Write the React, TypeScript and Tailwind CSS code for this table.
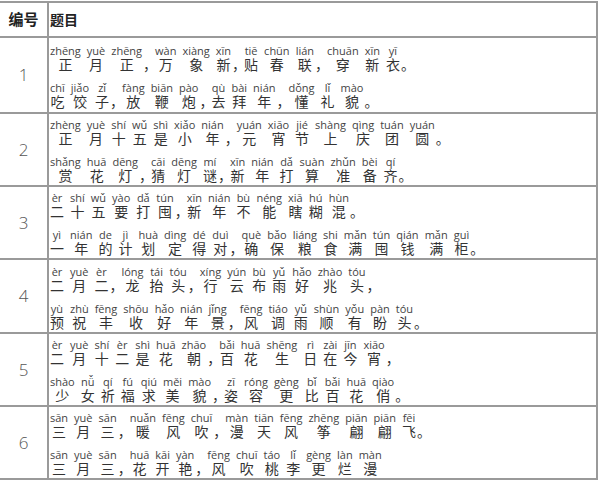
import React from "react";

type Word = [string, string, string];

const rows: { n: number; h: string; lines: Word[][] }[] = [
  {
    n: 1,
    h: "h-[76px]",
    lines: [
      [
        ["zhēng yuè zhēng", "正月正", "，"],
        ["wàn xiàng xīn", "万象新", "，"],
        ["tiē chūn lián", "贴春联", "，"],
        ["chuān xīn yī", "穿新衣", "。"],
      ],
      [
        ["chī jiǎo zǐ", "吃饺子", "，"],
        ["fàng biān pào", "放鞭炮", "，"],
        ["qù bài nián", "去拜年", "，"],
        ["dǒng lǐ mào", "懂礼貌", "。"],
      ],
    ],
  },
  {
    n: 2,
    h: "h-[73px]",
    lines: [
      [
        ["zhèng yuè shí wǔ shì xiǎo nián", "正月十五是小年", "，"],
        ["yuán xiāo jié shàng qìng tuán yuán", "元宵节上庆团圆", "。"],
      ],
      [
        ["shǎng huā dēng", "赏花灯", "，"],
        ["cāi dēng mí", "猜灯谜", "，"],
        ["xīn nián dǎ suàn zhǔn bèi qí", "新年打算准备齐", "。"],
      ],
    ],
  },
  {
    n: 3,
    h: "h-[73px]",
    lines: [
      [
        ["èr shí wǔ yào dǎ tún", "二十五要打囤", "，"],
        ["xīn nián bù néng xiā hú hùn", "新年不能瞎糊混", "。"],
      ],
      [
        ["yì nián de jì huà dìng dé duì", "一年的计划定得对", "，"],
        ["què bǎo liáng shi mǎn tún qián mǎn guì", "确保粮食满囤钱满柜", "。"],
      ],
    ],
  },
  {
    n: 4,
    h: "h-[74px]",
    lines: [
      [
        ["èr yuè èr", "二月二", "，"],
        ["lóng tái tóu", "龙抬头", "，"],
        ["xíng yún bù yǔ hǎo zhào tóu", "行云布雨好兆头", "，"],
      ],
      [
        ["yù zhù fēng shōu hǎo nián jǐng", "预祝丰收好年景", "，"],
        ["fēng tiáo yǔ shùn yǒu pàn tóu", "风调雨顺有盼头", "。"],
      ],
    ],
  },
  {
    n: 5,
    h: "h-[73px]",
    lines: [
      [
        ["èr yuè shí èr shì huā zhāo", "二月十二是花朝", "，"],
        ["bǎi huā shēng rì zài jīn xiāo", "百花生日在今宵", "，"],
      ],
      [
        ["shào nǚ qí fú qiú měi mào", "少女祈福求美貌", "，"],
        ["zī róng gèng bǐ bǎi huā qiào", "姿容更比百花俏", "。"],
      ],
    ],
  },
  {
    n: 6,
    h: "h-[73px]",
    lines: [
      [
        ["sān yuè sān", "三月三", "，"],
        ["nuǎn fēng chuī", "暖风吹", "，"],
        ["màn tiān fēng zhēng piān piān fēi", "漫天风筝翩翩飞", "。"],
      ],
      [
        ["sān yuè sān", "三月三", "，"],
        ["huā kāi yàn", "花开艳", "，"],
        ["fēng chuī táo lǐ gèng làn màn", "风吹桃李更烂漫", ""],
      ],
    ],
  },
];

const py = "block text-[11px] leading-[13px] text-[#444] font-['Open_Sans',sans-serif] whitespace-nowrap";
const hz = "block text-[14px] leading-[15px] text-[#333] font-['Noto_Sans_CJK_SC',sans-serif]";

function Line({ words }: { words: Word[] }) {
  return (
    <div className="flex gap-[3px]">
      {words.map(([p, h, punct], wi) => {
        const syl = p.split(" ");
        const chars = Array.from(h);
        return (
          <div key={wi} className="flex">
            <div className="flex gap-[6px]">
              {syl.map((s, i) => (
                <div key={i} className="flex flex-col items-center">
                  <span className={py}>{s}</span>
                  <span className={hz}>{chars[i]}</span>
                </div>
              ))}
            </div>
            {punct && (
              <div className="flex flex-col w-[9px] ml-[1px] overflow-visible">
                <span className={py}>&nbsp;</span>
                <span className={hz + " whitespace-nowrap"}>{punct}</span>
              </div>
            )}
          </div>
        );
      })}
    </div>
  );
}

export default function App() {
  return (
    <div className="w-[600px] h-[482px] bg-white pt-[1px] overflow-hidden">
      <div className="w-[598px] border-t-2 border-r-2 border-[#9a9a9a]">
        <div className="flex h-[35px] border-b-2 border-[#9a9a9a]">
          <div className="w-[49px] shrink-0 border-r-2 border-[#9a9a9a] flex items-center justify-center text-[15px] font-bold text-[#222] font-['Noto_Sans_CJK_SC',sans-serif]">
            编号
          </div>
          <div className="flex items-center pl-[1px] text-[14px] font-bold text-[#222] font-['Noto_Sans_CJK_SC',sans-serif]">
            题目
          </div>
        </div>
        {rows.map((r) => (
          <div key={r.n} className={"flex border-b-2 border-[#9a9a9a] " + r.h}>
            <div className="w-[49px] shrink-0 border-r-2 border-[#9a9a9a] flex items-center justify-center text-[17px] font-light text-[#555] font-['Open_Sans',sans-serif]">
              {r.n}
            </div>
            <div className="flex flex-col justify-center gap-[9px] pt-[2px] pl-[1px]">
              {r.lines.map((l, i) => (
                <Line key={i} words={l} />
              ))}
            </div>
          </div>
        ))}
      </div>
    </div>
  );
}
